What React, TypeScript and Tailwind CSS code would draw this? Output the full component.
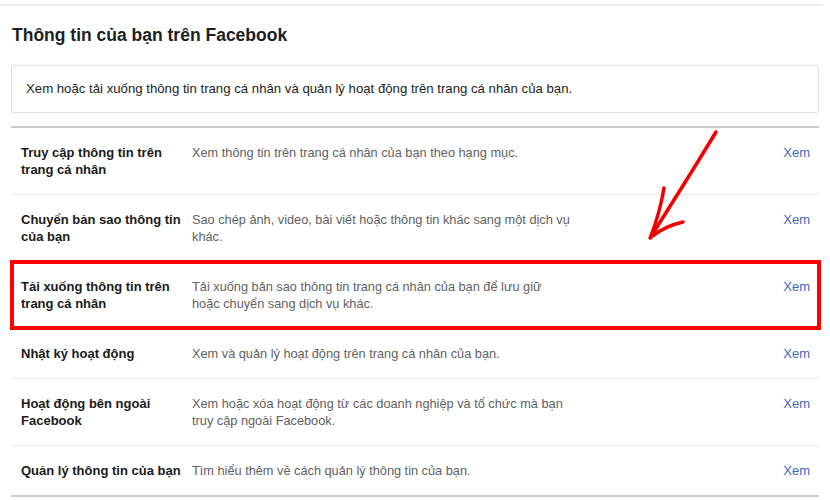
import React from "react";

type Row = { title: string[]; desc: string[]; highlight?: boolean };

const rows: Row[] = [
  {
    title: ["Truy cập thông tin trên", "trang cá nhân"],
    desc: ["Xem thông tin trên trang cá nhân của bạn theo hạng mục."],
  },
  {
    title: ["Chuyển bản sao thông tin", "của bạn"],
    desc: ["Sao chép ảnh, video, bài viết hoặc thông tin khác sang một dịch vụ", "khác."],
  },
  {
    title: ["Tải xuống thông tin trên", "trang cá nhân"],
    desc: ["Tải xuống bản sao thông tin trang cá nhân của bạn để lưu giữ", "hoặc chuyển sang dịch vụ khác."],
    highlight: true,
  },
  {
    title: ["Nhật ký hoạt động"],
    desc: ["Xem và quản lý hoạt động trên trang cá nhân của bạn."],
  },
  {
    title: ["Hoạt động bên ngoài", "Facebook"],
    desc: ["Xem hoặc xóa hoạt động từ các doanh nghiệp và tổ chức mà bạn", "truy cập ngoài Facebook."],
  },
  {
    title: ["Quản lý thông tin của bạn"],
    desc: ["Tìm hiểu thêm về cách quản lý thông tin của bạn."],
  },
];

export default function App() {
  return (
    <div className="relative w-[830px] h-[500px] overflow-hidden bg-white font-['Liberation_Sans',Arial,sans-serif]">
      <div className="h-[4px]" />
      <div className="h-[2px] w-[823px] bg-[#ebebeb]" />
      <div className="px-[11px]">
        <h1 className="mt-[18px] pl-px text-[17.5px] font-bold leading-[22px] text-[#1c1e21]">
          Thông tin của bạn trên Facebook
        </h1>
        <div className="mt-[19px] flex h-[48px] items-center rounded-[3px] border border-[#dddfe2] px-[14px] text-[13.2px] text-[#1c1e21]">
          Xem hoặc tải xuống thông tin trang cá nhân và quản lý hoạt động trên trang cá nhân của bạn.
        </div>
        <div className="mt-[13px] border-t-2 border-b-2 border-[#cccccc]">
          {rows.map((r, i) => (
            <div
              key={i}
              className={`relative flex items-start py-4 pl-[10px] pr-[9px] leading-[17px] ${
                i < rows.length - 1 ? "border-b border-[#e9ebee]" : ""
              }`}
            >
              <div className="w-[171px] shrink-0 whitespace-nowrap text-[13px] font-bold text-[#1a1a1a]">
                {r.title.map((t, j) => (
                  <div key={j}>{t}</div>
                ))}
              </div>
              <div className="whitespace-nowrap text-[12.75px] text-[#616161]">
                {r.desc.map((t, j) => (
                  <div key={j}>{t}</div>
                ))}
              </div>
              <div className="ml-auto text-[13px] text-[#3d67c0]">Xem</div>
              {r.highlight && (
                <div className="pointer-events-none absolute -left-px -right-[2px] -top-[2px] -bottom-[2px] border-[4px] border-[#ff0000]" />
              )}
            </div>
          ))}
        </div>
      </div>
      <svg
        className="pointer-events-none absolute left-0 top-0"
        width="830"
        height="500"
        viewBox="0 0 830 500"
        fill="none"
      >
        <path d="M716 132 Q690 175 650 238" stroke="#f20000" strokeWidth="3.5" strokeLinecap="round" />
        <path d="M664 188 Q660 212 651 236" stroke="#f20000" strokeWidth="3.5" strokeLinecap="round" />
        <path d="M683 222 Q665 226 651 237" stroke="#f20000" strokeWidth="3.5" strokeLinecap="round" />
      </svg>
    </div>
  );
}
